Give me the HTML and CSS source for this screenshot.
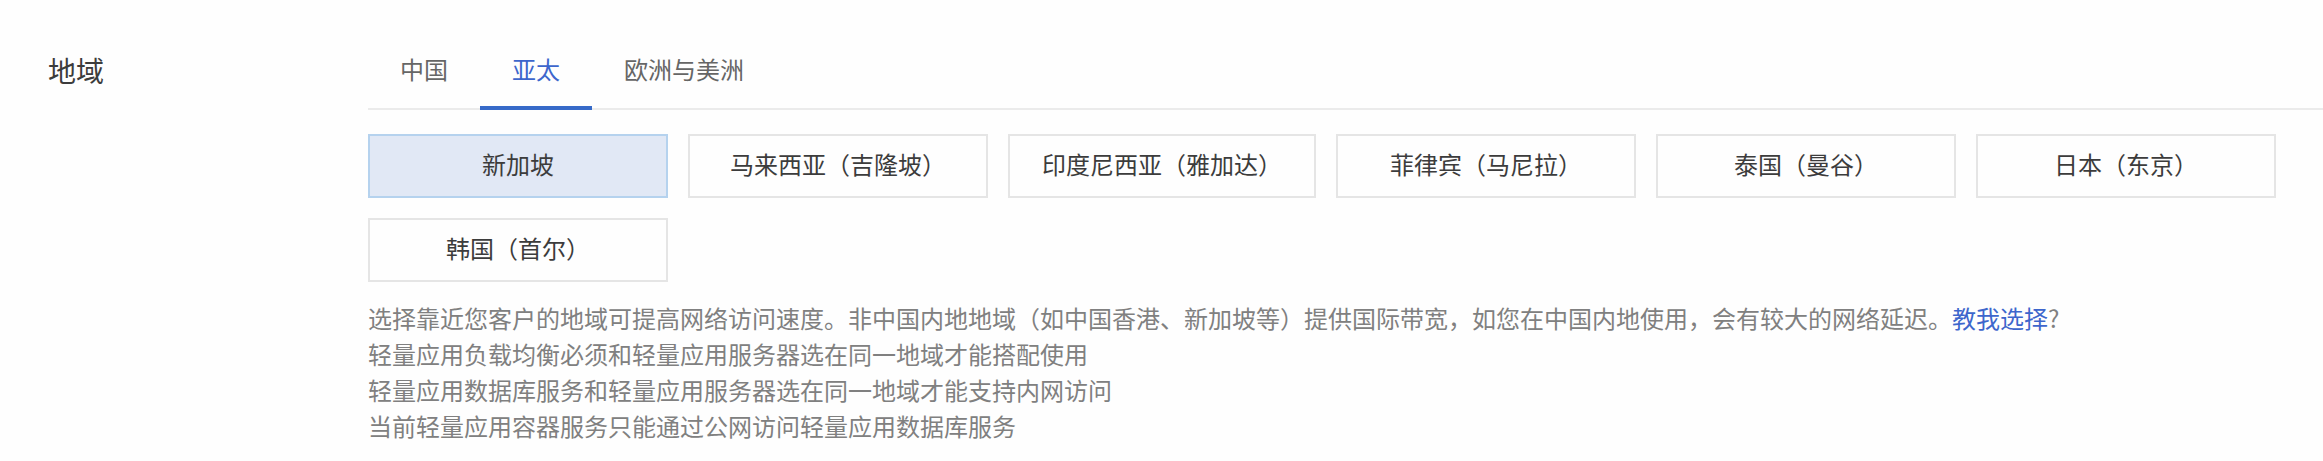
FILE: index.html
```html
<!DOCTYPE html>
<html lang="zh-CN">
<head>
<meta charset="utf-8">
<title>地域</title>
<link rel="stylesheet" href="styles.css">
</head>
<body>
<section class="field">
  <h2 class="field-label" id="region-label">地域</h2>
  <div class="field-body">
    <div class="tabs" role="tablist" aria-labelledby="region-label">
      <button class="tab" type="button" role="tab" aria-selected="false">中国</button>
      <button class="tab tab-active" type="button" role="tab" aria-selected="true">亚太</button>
      <button class="tab" type="button" role="tab" aria-selected="false">欧洲与美洲</button>
    </div>
    <div class="regions">
      <button class="region region-selected" type="button" aria-pressed="true">新加坡</button>
      <button class="region" type="button">马来西亚（吉隆坡）</button>
      <button class="region" type="button">印度尼西亚（雅加达）</button>
      <button class="region" type="button">菲律宾（马尼拉）</button>
      <button class="region" type="button">泰国（曼谷）</button>
      <button class="region" type="button">日本（东京）</button>
      <button class="region" type="button">韩国（首尔）</button>
    </div>
    <div class="notes">
      <p class="note">选择靠近您客户的地域可提高网络访问速度。非中国内地地域（如中国香港、新加坡等）提供国际带宽，如您在中国内地使用，会有较大的网络延迟。<a class="note-link" href="#">教我选择</a>?</p>
      <p class="note">轻量应用负载均衡必须和轻量应用服务器选在同一地域才能搭配使用</p>
      <p class="note">轻量应用数据库服务和轻量应用服务器选在同一地域才能支持内网访问</p>
      <p class="note">当前轻量应用容器服务只能通过公网访问轻量应用数据库服务</p>
    </div>
  </div>
</section>
</body>
</html>
```
FILE: styles.css
```css
* {
  box-sizing: border-box;
}

body {
  margin: 0;
  background: #fefefe;
  color: #3c3c3c;
  font-family: "Noto Sans CJK SC", sans-serif;
  font-size: 24px;
  line-height: 36px;
  text-spacing-trim: space-all;
}

button {
  font: inherit;
  cursor: pointer;
}

.field {
  display: flex;
  padding: 32px 0 16px 48px;
}

.field-label {
  flex: 0 0 320px;
  margin: 0;
  padding-top: 20px;
  font-size: 28px;
  font-weight: 400;
}

.field-body {
  flex: 1;
  min-width: 0;
}

.tabs {
  display: flex;
  height: 78px;
  border-bottom: 2px solid #ebebeb;
}

.tab {
  height: 78px;
  padding: 0 32px;
  border: 0;
  border-bottom: 4px solid transparent;
  background: none;
  color: #666;
}

.tab-active {
  border-bottom-color: #366ac8;
  color: #3d66cc;
}

.regions {
  display: flex;
  flex-wrap: wrap;
  gap: 20px;
  padding: 24px 40px 18px 0;
}

.region {
  min-width: 300px;
  height: 64px;
  padding: 0 32px 4px;
  border: 2px solid #e5e5e5;
  background: #fefefe;
  color: #3c3c3c;
}

.region-selected {
  border-color: #b5d2ee;
  background: #e1e8f5;
}

.note {
  margin: 0;
  color: #808080;
}

.note-link {
  color: #3d66cc;
  text-decoration: none;
}
```
